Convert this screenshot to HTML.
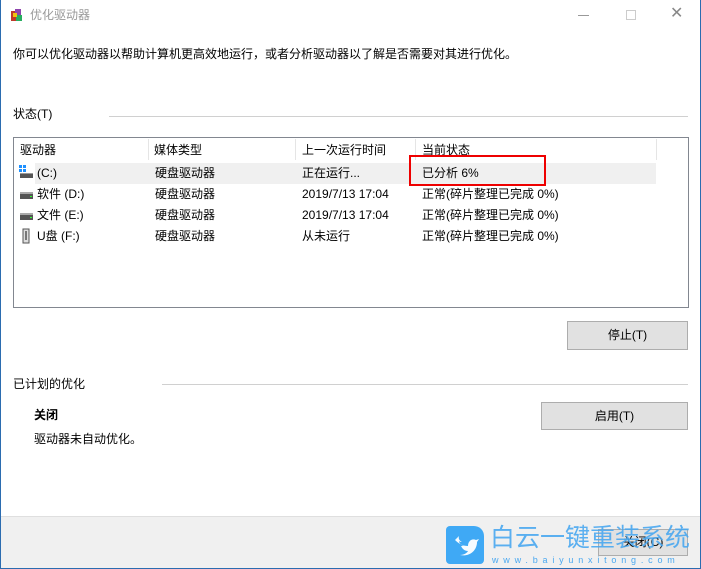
<!DOCTYPE html>
<html><head><meta charset="utf-8"><style>
*{margin:0;padding:0;box-sizing:border-box}
body{width:701px;height:569px;position:relative;background:#fff;font-family:"Liberation Sans","Microsoft YaHei","Noto Sans CJK SC",sans-serif;font-size:12px;color:#000;overflow:hidden}
.a{position:absolute;white-space:nowrap}
.win{position:absolute;left:0;top:0;width:701px;height:569px;border:1px solid #2b6cb0;border-top:none}
.btn{position:absolute;background:#e1e1e1;border:1px solid #adadad;text-align:center;line-height:26px}
.t{line-height:16px}
</style></head><body>
<div class="win"></div>
<div class="a" style="left:10px;top:8px;width:14px;height:14px">
<svg width="14" height="14"><rect x="1" y="3" width="6" height="10" fill="#c0392b"/><rect x="5" y="1" width="6" height="8" fill="#8e44ad"/><rect x="6" y="7" width="6" height="6" fill="#27ae60"/><rect x="3" y="5" width="4" height="4" fill="#f1c40f"/></svg></div>
<div class="a t" style="left:30px;top:7px;color:#999">优化驱动器</div>
<div class="a" style="left:578px;top:15px;width:11px;height:1px;background:#999"></div>
<div class="a" style="left:626px;top:10px;width:10px;height:10px;border:1px solid #ccc"></div>
<div class="a" style="left:670px;top:5px;color:#888;font-size:16px;line-height:18px">✕</div>
<div class="a t" style="left:13px;top:46px">你可以优化驱动器以帮助计算机更高效地运行，或者分析驱动器以了解是否需要对其进行优化。</div>
<div class="a t" style="left:13px;top:106px">状态(T)</div>
<div class="a" style="left:109px;top:116px;width:579px;height:1px;background:#d0d0d0"></div>
<div class="a" style="left:13px;top:137px;width:676px;height:171px;border:1px solid #828790"></div>
<div class="a" style="left:148px;top:139px;width:1px;height:21px;background:#e5e5e5"></div>
<div class="a" style="left:295px;top:139px;width:1px;height:21px;background:#e5e5e5"></div>
<div class="a" style="left:415px;top:139px;width:1px;height:21px;background:#e5e5e5"></div>
<div class="a" style="left:656px;top:139px;width:1px;height:21px;background:#e5e5e5"></div>
<div class="a t" style="left:20px;top:142px">驱动器</div>
<div class="a t" style="left:154px;top:142px">媒体类型</div>
<div class="a t" style="left:302px;top:142px">上一次运行时间</div>
<div class="a t" style="left:422px;top:142px">当前状态</div>
<div class="a" style="left:35px;top:163px;width:621px;height:21px;background:#f0f0f0"></div>
<svg class="a" style="left:18px;top:164px" width="16" height="16"><rect x="1" y="1" width="3" height="3" fill="#1e90ff"/><rect x="5" y="1" width="3" height="3" fill="#1e90ff"/><rect x="1" y="5" width="3" height="3" fill="#1e90ff"/><rect x="5" y="5" width="3" height="3" fill="#1e90ff"/><rect x="2" y="9" width="13" height="5" fill="#555"/><rect x="2" y="9" width="13" height="1" fill="#999"/></svg>
<svg class="a" style="left:18px;top:187px" width="16" height="14"><rect x="2" y="6" width="13" height="6" fill="#555"/><rect x="2" y="5" width="13" height="2" fill="#aaa"/><rect x="12" y="9" width="2" height="1" fill="#3f3"/></svg>
<svg class="a" style="left:18px;top:208px" width="16" height="14"><rect x="2" y="6" width="13" height="6" fill="#555"/><rect x="2" y="5" width="13" height="2" fill="#aaa"/><rect x="12" y="9" width="2" height="1" fill="#3f3"/></svg>
<svg class="a" style="left:20px;top:228px" width="12" height="16"><rect x="3" y="1" width="6" height="14" fill="#ddd" stroke="#555"/><rect x="5" y="3" width="2" height="9" fill="#777"/></svg>
<div class="a t" style="left:37px;top:165px">(C:)</div>
<div class="a t" style="left:37px;top:186px">软件 (D:)</div>
<div class="a t" style="left:37px;top:207px">文件 (E:)</div>
<div class="a t" style="left:37px;top:228px">U盘 (F:)</div>
<div class="a t" style="left:155px;top:165px">硬盘驱动器</div>
<div class="a t" style="left:155px;top:186px">硬盘驱动器</div>
<div class="a t" style="left:155px;top:207px">硬盘驱动器</div>
<div class="a t" style="left:155px;top:228px">硬盘驱动器</div>
<div class="a t" style="left:302px;top:165px">正在运行...</div>
<div class="a t" style="left:302px;top:186px">2019/7/13 17:04</div>
<div class="a t" style="left:302px;top:207px">2019/7/13 17:04</div>
<div class="a t" style="left:302px;top:228px">从未运行</div>
<div class="a t" style="left:422px;top:165px">已分析 6%</div>
<div class="a t" style="left:422px;top:186px">正常(碎片整理已完成 0%)</div>
<div class="a t" style="left:422px;top:207px">正常(碎片整理已完成 0%)</div>
<div class="a t" style="left:422px;top:228px">正常(碎片整理已完成 0%)</div>
<div class="a" style="left:409px;top:155px;width:137px;height:31px;border:2px solid #e00"></div>
<div class="btn" style="left:567px;top:321px;width:121px;height:29px">停止(T)</div>
<div class="a t" style="left:13px;top:376px">已计划的优化</div>
<div class="a" style="left:162px;top:384px;width:526px;height:1px;background:#d0d0d0"></div>
<div class="a t" style="left:34px;top:407px;font-weight:bold">关闭</div>
<div class="btn" style="left:541px;top:402px;width:147px;height:28px">启用(T)</div>
<div class="a t" style="left:34px;top:431px">驱动器未自动优化。</div>
<div class="a" style="left:1px;top:516px;width:699px;height:52px;background:#f0f0f0;border-top:1px solid #dfdfdf"></div>
<div class="btn" style="left:598px;top:529px;width:90px;height:27px;line-height:25px">关闭(C)</div>
<div class="a" style="left:446px;top:526px;width:38px;height:38px;background:#3fa9f5;border-radius:4px 10px 4px 4px"></div>
<svg class="a" style="left:452px;top:532px" width="28" height="26"><path d="M3 8c4 4 8 6 13 6 0-5 4-8 8-6l3-1-2 3c0 9-8 15-17 13 4 0 7-2 8-4-4 0-6-3-7-5h3c-3-1-5-3-5-5 1 1 2 1 3 1-2-1-4-3-3-6z" fill="#fff" opacity=".95"/></svg>
<div class="a" style="left:490px;top:524px;font-size:25px;line-height:28px;color:#4aa8f0;opacity:.9">白云一键重装系统</div>
<div class="a" style="left:492px;top:555px;font-size:9px;line-height:10px;color:#4aa8f0;letter-spacing:4.8px">www.baiyunxitong.com</div>
</body></html>
